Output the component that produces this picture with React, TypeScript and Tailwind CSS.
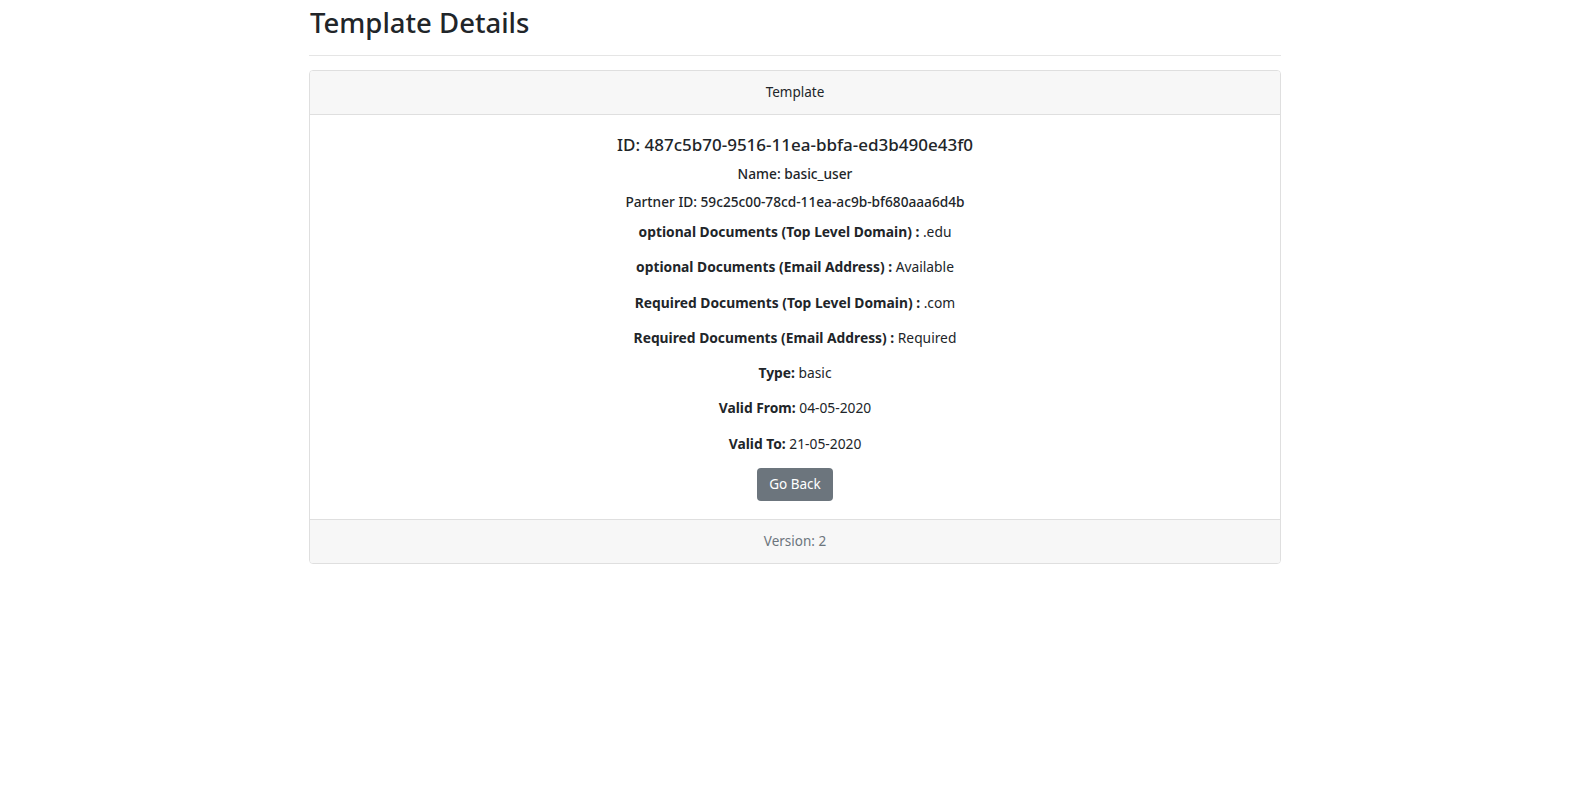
import React from "react";

const rows: { label: string; value: string }[] = [
  { label: "optional Documents (Top Level Domain) :", value: ".edu" },
  { label: "optional Documents (Email Address) :", value: "Available" },
  { label: "Required Documents (Top Level Domain) :", value: ".com" },
  { label: "Required Documents (Email Address) :", value: "Required" },
  { label: "Type:", value: "basic" },
  { label: "Valid From:", value: "04-05-2020" },
  { label: "Valid To:", value: "21-05-2020" },
];

export default function App() {
  return (
    <div className="min-h-screen bg-white text-[#212529] font-['Noto_Sans',sans-serif]">
      <div className="mx-auto w-[972px]">
        <h2 className="pt-[4px] pl-px text-[27.5px] leading-[38px] font-medium">Template Details</h2>
        <hr className="mt-[13px] border-t border-[#e5e5e5]" />

        <div className="mt-[14px] rounded-[4px] border border-[#dfdfdf] overflow-hidden">
          <div className="h-[44px] flex items-center justify-center bg-[#f7f7f7] border-b border-[#dfdfdf] text-[13.5px]">
            Template
          </div>

          <div className="flex flex-col items-center pt-[19px] pb-[18px] text-[14px]">
            <h5 className="text-[17px] leading-[21px] font-medium mb-[8px]">
              ID: 487c5b70-9516-11ea-bbfa-ed3b490e43f0
            </h5>
            <h6 className="text-[13.7px] leading-[21px] font-medium mb-[7px]">Name: basic_user</h6>
            <h6 className="text-[13.7px] leading-[21px] font-medium mb-[9px]">
              Partner ID: 59c25c00-78cd-11ea-ac9b-bf680aaa6d4b
            </h6>
            {rows.map((r) => (
              <p key={r.label} className="text-[13.8px] leading-[21px] mb-[14.3px]">
                <span className="font-bold">{r.label}</span> {r.value}
              </p>
            ))}
            <button className="h-[33px] px-[12px] rounded-[4px] bg-[#6c757d] text-white text-[13.5px] leading-[21px]">
              Go Back
            </button>
          </div>

          <div className="h-[44px] flex items-center justify-center bg-[#f7f7f7] border-t border-[#dfdfdf] text-[13.5px] text-[#6c757d]">
            Version: 2
          </div>
        </div>
      </div>
    </div>
  );
}
